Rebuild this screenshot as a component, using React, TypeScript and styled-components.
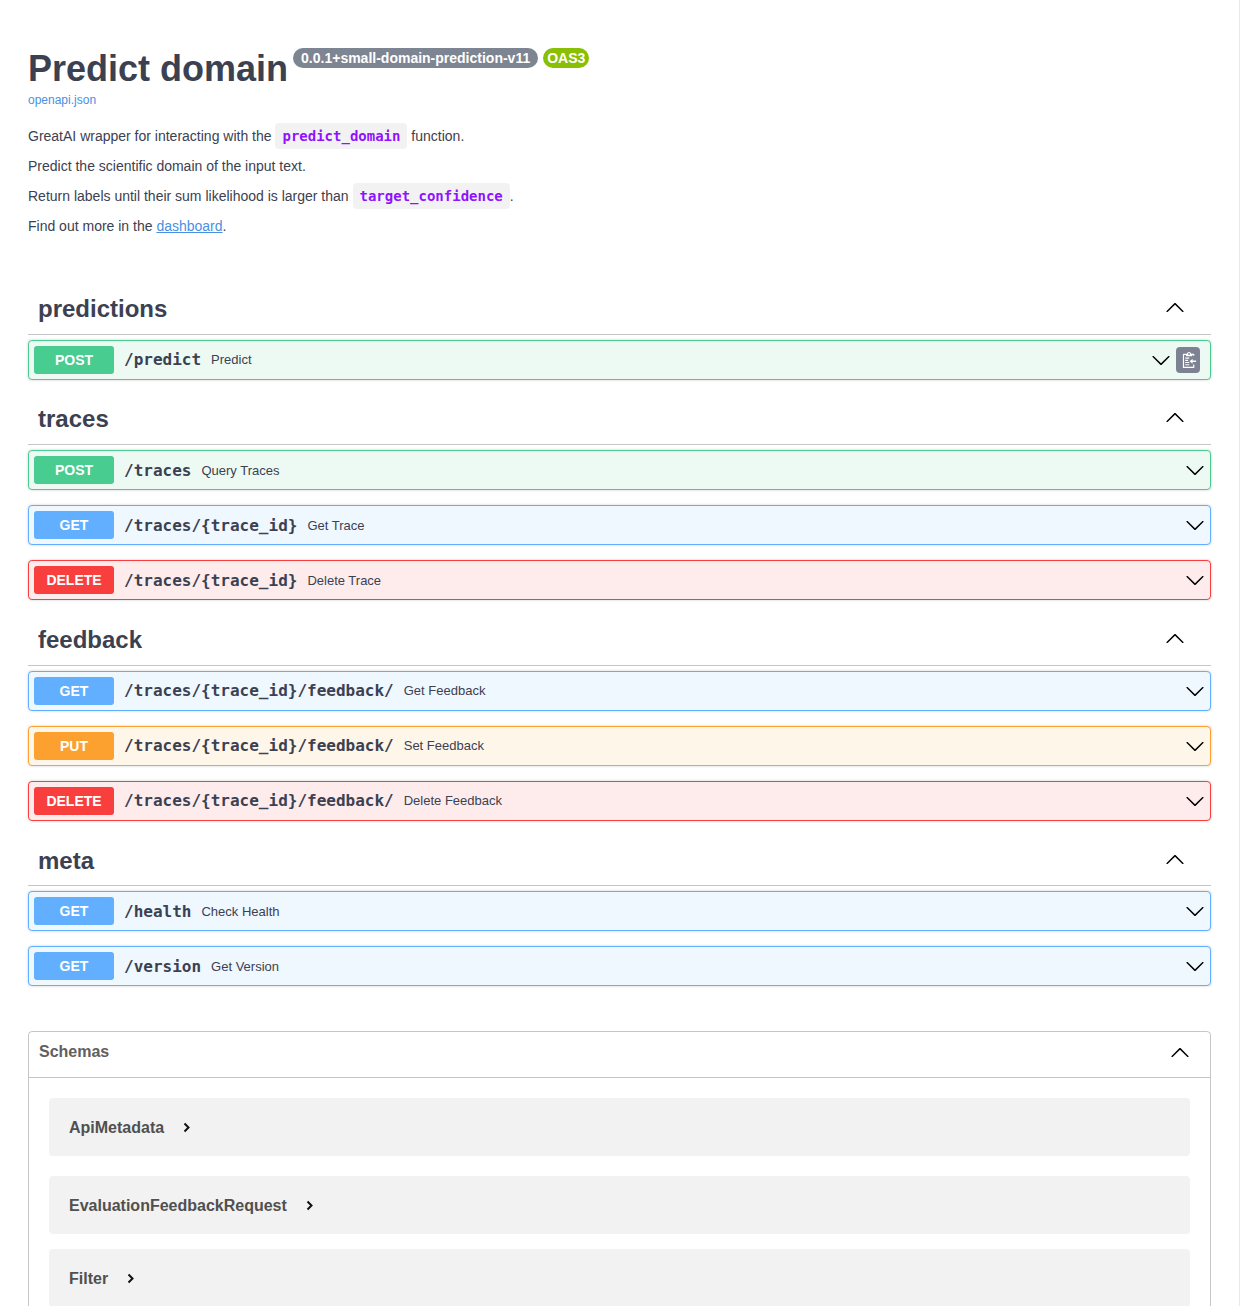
import React from "react";
import styled, { createGlobalStyle } from "styled-components";

const Global = createGlobalStyle`
  html, body { margin: 0; padding: 0; background: #fff; height: 1306px; overflow: hidden; }
  * { box-sizing: border-box; }
`;

const Page = styled.div`
  width: 1240px;
  height: 1306px;
  overflow: hidden;
  border-right: 1px solid #e8e8e8;
  padding: 0 28px;
  font-family: "Liberation Sans", Arial, sans-serif;
  color: #3b4151;
`;

const Info = styled.section`
  padding-top: 48px;
  height: 284.28px;
`;

const Title = styled.h2`
  margin: 0;
  font-size: 36px;
  line-height: 41px;
  font-weight: 700;
  color: #3b4151;
  display: flex;
  align-items: flex-start;
`;

const Pill = styled.span<{ $bg: string }>`
  background: ${(p) => p.$bg};
  color: #fff;
  border-radius: 57px;
  font-size: 14px;
  line-height: 20px;
  height: 20px;
  padding: 0 ${(p) => (p.$bg === "#89bf04" ? "4px" : "8px")};
  font-weight: 700;
  margin-left: 5px;
`;

const SpecLink = styled.a`
  display: block;
  margin-top: 4px;
  font-size: 12px;
  line-height: 14px;
  color: #4990e2;
  text-decoration: none;
`;

const Description = styled.div`
  margin-top: 14px;
`;

const Para = styled.p`
  margin: 0;
  height: 30px;
  font-size: 14px;
  line-height: 30px;
  color: #3b4151;
`;

const InlineCode = styled.code`
  display: inline-block;
  height: 26px;
  line-height: 26px;
  padding: 0 7px;
  border-radius: 4px;
  background: rgba(0, 0, 0, 0.05);
  color: #9012fe;
  font-family: "DejaVu Sans Mono", monospace;
  font-size: 14px;
  font-weight: 700;
  vertical-align: baseline;
`;

const DocLink = styled.a`
  color: #4990e2;
  text-decoration: underline;
`;

const Tag = styled.h3<{ $top: number }>`
  margin: 0 0 5px;
  height: 50.44px;
  padding: ${(p) => p.$top}px 26px 0 10px;
  display: flex;
  align-items: center;
  justify-content: space-between;
  border-bottom: 1px solid rgba(59, 65, 81, 0.3);
  font-size: 24px;
  font-weight: 700;
  color: #3b4151;
`;

const Op = styled.div<{ $c: string; $bg: string }>`
  height: 40px;
  margin-bottom: 15px;
  padding: 0.4px 5px 0;
  display: flex;
  align-items: center;
  border: 1px solid ${(p) => p.$c};
  border-radius: 4px;
  background: ${(p) => p.$bg};
  box-shadow: 0 0 3px rgba(0, 0, 0, 0.19);
`;

const Method = styled.span<{ $c: string }>`
  flex: none;
  width: 80px;
  height: 28px;
  line-height: 28px;
  text-align: center;
  border-radius: 3px;
  background: ${(p) => p.$c};
  color: #fff;
  font-size: 14px;
  font-weight: 700;
`;

const Path = styled.span`
  padding: 0 10px;
  font-family: "DejaVu Sans Mono", monospace;
  font-size: 16px;
  font-weight: 700;
  color: #3b4151;
`;

const Desc = styled.span`
  flex: 1;
  font-size: 13px;
  color: #3b4151;
`;

const Arrow = styled.svg<{ $flip?: boolean; $nudge?: number }>`
  flex: none;
  width: 20px;
  height: 20px;
  margin-top: ${(p) => p.$nudge ?? 0}px;
  fill: #000;
  transform: ${(p) => (p.$flip ? "rotate(180deg)" : "none")};
`;

const CopyButton = styled.span`
  flex: none;
  width: 24px;
  height: 26px;
  margin-left: 5px;
  margin-right: 5px;
  padding-left: 2px;
  border-radius: 4px;
  background: #7d8293;
  display: flex;
  align-items: center;
  justify-content: center;
`;

const Schemas = styled.section`
  margin-top: 14.9px;
  border: 1px solid rgba(59, 65, 81, 0.3);
  border-radius: 4px;
`;

const SchemaHead = styled.h4`
  margin: 0;
  height: 46px;
  padding: 0 20px 4px 10px;
  display: flex;
  align-items: center;
  justify-content: space-between;
  border-bottom: 1px solid rgba(59, 65, 81, 0.3);
  font-size: 16px;
  font-weight: 700;
  color: #606060;
`;

const SchemaList = styled.div`
  padding: 20px 20px 0;
`;

const Model = styled.div<{ $gap: number }>`
  height: 58px;
  margin-bottom: ${(p) => p.$gap}px;
  padding: 2px 20px 0;
  display: flex;
  align-items: center;
  gap: 19px;
  border-radius: 4px;
  background: rgba(0, 0, 0, 0.05);
  font-size: 16px;
  font-weight: 700;
  color: #505050;
`;

const Spacer = styled.div`
  height: 15px;
`;

const ArrowPath = "M17.418 6.109c.272-.268.709-.268.979 0s.271.701 0 .969l-7.908 7.83c-.27.268-.707.268-.979 0l-7.908-7.83c-.27-.268-.27-.701 0-.969.271-.268.709-.268.979 0L10 13.25l7.418-7.141z";

const Chevron = ({ flip, nudge }: { flip?: boolean; nudge?: number }) => (
  <Arrow $flip={flip} $nudge={nudge} viewBox="0 0 20 20"><path d={ArrowPath} /></Arrow>
);

const Caret = () => (
  <svg width="8" height="11" viewBox="0 0 8 11" fill="none" stroke="#111" strokeWidth="2">
    <path d="M1.5 1.5 5.5 5.5 1.5 9.5" />
  </svg>
);

const CopyIcon = () => (
  <svg width="15" height="16" viewBox="0 0 15.698 19" fill="#fff">
    <path d="M13.6 4.4V2.9c0-.4-.3-.7-.7-.7H9.8C9.6.9 8.6 0 7.3 0S5 .9 4.8 2.2H.7c-.4 0-.7.3-.7.7v15.4c0 .4.3.7.7.7h12.2c.4 0 .7-.3.7-.7v-3.6h-1.4v2.9H1.4v-14h2.2v1.4h7.6V3.6h1V4.4h1.4zM7.3 1.2c.6 0 1.1.5 1.1 1.1s-.5 1.1-1.1 1.1-1.1-.5-1.1-1.1.5-1.1 1.1-1.1z" />
    <path d="M2.8 6.6h4.8V8H2.8zM2.8 9.2h3.4v1.4H2.8zM2.8 11.8h4.8v1.4H2.8zM2.8 14.4h4.8v1.4H2.8z" />
    <path d="M15.7 10.2h-4.2V8l-3.5 3 3.5 3v-2.2h4.2z" />
  </svg>
);

const C = {
  POST: ["#49cc90", "#edfaf4"],
  GET: ["#61affe", "#eff7ff"],
  DELETE: ["#f93e3e", "#feecec"],
  PUT: ["#fca130", "#fff6ea"],
} as const;

type Row = { m: keyof typeof C; p: string; d: string; copy?: boolean };

const groups: { name: string; top: number; rows: Row[] }[] = [
  { name: "predictions", top: 0, rows: [{ m: "POST", p: "/predict", d: "Predict", copy: true }] },
  {
    name: "traces",
    top: 0,
    rows: [
      { m: "POST", p: "/traces", d: "Query Traces" },
      { m: "GET", p: "/traces/{trace_id}", d: "Get Trace" },
      { m: "DELETE", p: "/traces/{trace_id}", d: "Delete Trace" },
    ],
  },
  {
    name: "feedback",
    top: 0,
    rows: [
      { m: "GET", p: "/traces/{trace_id}/feedback/", d: "Get Feedback" },
      { m: "PUT", p: "/traces/{trace_id}/feedback/", d: "Set Feedback" },
      { m: "DELETE", p: "/traces/{trace_id}/feedback/", d: "Delete Feedback" },
    ],
  },
  {
    name: "meta",
    top: 1,
    rows: [
      { m: "GET", p: "/health", d: "Check Health" },
      { m: "GET", p: "/version", d: "Get Version" },
    ],
  },
];

const models: [string, number][] = [
  ["ApiMetadata", 20],
  ["EvaluationFeedbackRequest", 15],
  ["Filter", 15],
];

export default function App() {
  return (
    <Page>
      <Global />
      <Info>
        <Title>
          Predict domain
          <Pill $bg="#7d8492">0.0.1+small-domain-prediction-v11</Pill>
          <Pill $bg="#89bf04">OAS3</Pill>
        </Title>
        <SpecLink href="#">openapi.json</SpecLink>
        <Description>
          <Para>GreatAI wrapper for interacting with the <InlineCode>predict_domain</InlineCode> function.</Para>
          <Para>Predict the scientific domain of the input text.</Para>
          <Para>Return labels until their sum likelihood is larger than <InlineCode>target_confidence</InlineCode>.</Para>
          <Para>Find out more in the <DocLink href="#">dashboard</DocLink>.</Para>
        </Description>
      </Info>
      {groups.map((g) => (
        <section key={g.name}>
          <Tag $top={g.top}>
            {g.name}
            <Chevron flip nudge={-2} />
          </Tag>
          {g.rows.map((r) => (
            <Op key={r.m + r.p} $c={C[r.m][0]} $bg={C[r.m][1]}>
              <Method $c={C[r.m][0]}>{r.m}</Method>
              <Path>{r.p}</Path>
              <Desc>{r.d}</Desc>
              <Chevron />
              {r.copy && (
                <CopyButton><CopyIcon /></CopyButton>
              )}
            </Op>
          ))}
        </section>
      ))}
      <Spacer />
      <Schemas>
        <SchemaHead>
          Schemas
          <Chevron flip nudge={2} />
        </SchemaHead>
        <SchemaList>
          {models.map(([n, gap]) => (
            <Model key={n} $gap={gap}>
              {n}
              <Caret />
            </Model>
          ))}
        </SchemaList>
      </Schemas>
    </Page>
  );
}
